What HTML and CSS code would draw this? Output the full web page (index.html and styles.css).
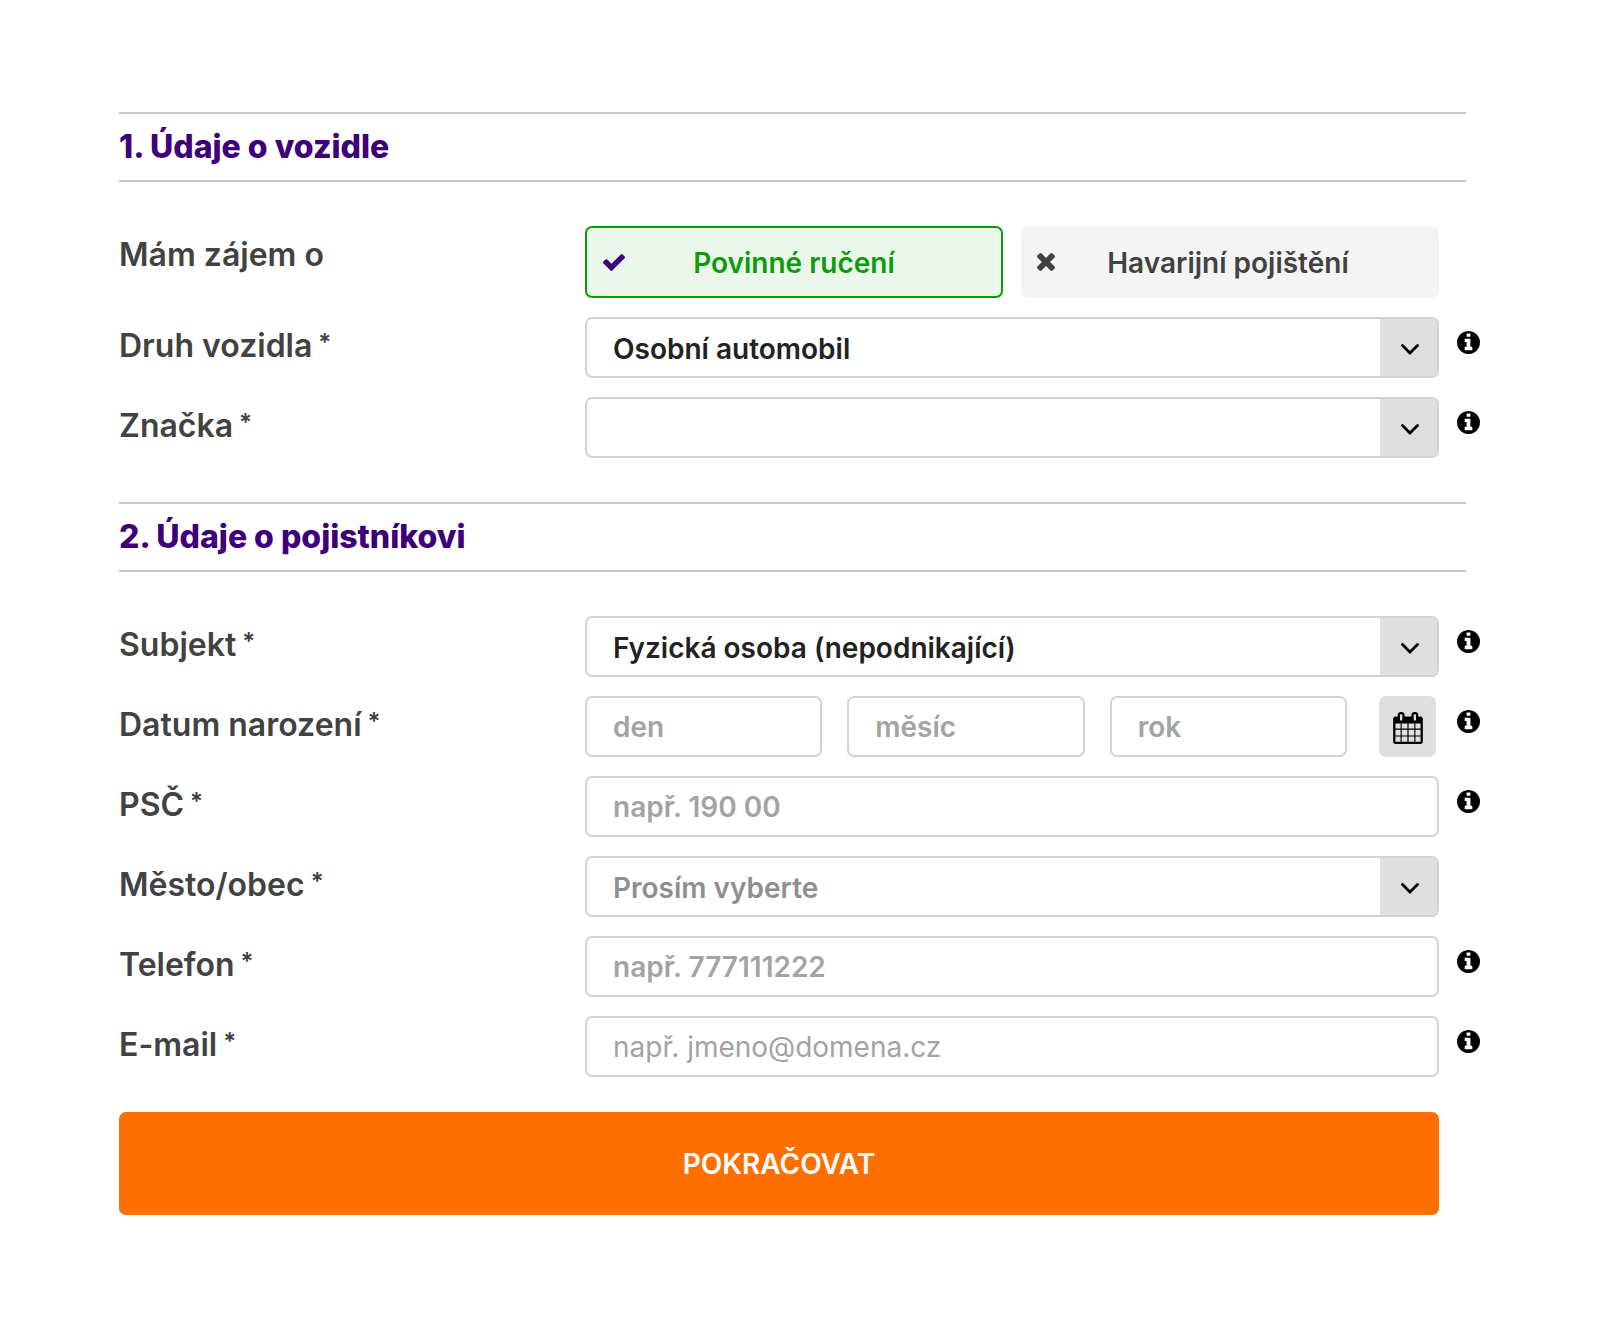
FILE: index.html
```html
<!DOCTYPE html>
<html lang="cs">
<head>
<meta charset="utf-8">
<meta name="viewport" content="width=device-width, initial-scale=1">
<title>Povinné ručení</title>
<link rel="stylesheet" href="styles.css">
</head>
<body>
<svg class="sprite" aria-hidden="true">
  <symbol id="icon-check" viewBox="121 334 1550 1188"><path d="M1671 566q0 40-28 68l-724 724-136 136q-28 28-68 28t-68-28l-136-136-362-362q-28-28-28-68t28-68l136-136q28-28 68-28t68 28l294 295 656-657q28-28 68-28t68 28l136 136q28 28 28 68z"/></symbol>
  <symbol id="icon-times" viewBox="302 366 1188 1188"><path d="M1490 1322q0 40-28 68l-136 136q-28 28-68 28t-68-28l-294-294-294 294q-28 28-68 28t-68-28l-136-136q-28-28-28-68t28-68l294-294-294-294q-28-28-28-68t28-68l136-136q28-28 68-28t68 28l294 294 294-294q28-28 68-28t68 28l136 136q28 28 28 68t-28 68l-294 294 294 294q28 28 28 68z"/></symbol>
  <symbol id="icon-info" viewBox="128 128 1536 1536"><path d="M1152 1376v-160q0-14-9-23t-23-9h-96v-512q0-14-9-23t-23-9h-320q-14 0-23 9t-9 23v160q0 14 9 23t23 9h96v320h-96q-14 0-23 9t-9 23v160q0 14 9 23t23 9h448q14 0 23-9t9-23zm-128-896v-160q0-14-9-23t-23-9h-192q-14 0-23 9t-9 23v160q0 14 9 23t23 9h192q14 0 23-9t9-23zm640 416q0 209-103 385.5t-279.5 279.5-385.5 103-385.5-103-279.5-279.5-103-385.5 103-385.5 279.5-279.5 385.5-103 385.5 103 279.5 279.5 103 385.5z"/></symbol>
  <symbol id="icon-calendar" viewBox="64 0 1664 1792"><path d="M192 1664h288v-288h-288v288zm352 0h320v-288h-320v288zm-352-352h288v-320h-288v320zm352 0h320v-320h-320v320zm-352-384h288v-288h-288v288zm736 736h320v-288h-320v288zm-384-736h320v-288h-320v288zm768 736h288v-288h-288v288zm-384-352h320v-320h-320v320zm-352-864v-288q0-13-9.500-22.500t-22.500-9.500h-64q-13 0-22.500 9.500t-9.500 22.500v288q0 13 9.500 22.500t22.500 9.500h64q13 0 22.500-9.500t9.500-22.500zm736 864h288v-320h-288v320zm-384-384h320v-288h-320v288zm384 0h288v-288h-288v288zm32-480v-288q0-13-9.500-22.500t-22.500-9.500h-64q-13 0-22.500 9.500t-9.500 22.500v288q0 13 9.500 22.500t22.500 9.500h64q13 0 22.500-9.500t9.500-22.500zm384-64v1280q0 52-38 90t-90 38h-1408q-52 0-90-38t-38-90v-1280q0-52 38-90t90-38h128v-96q0-66 47-113t113-47h64q66 0 113 47t47 113v96h384v-96q0-66 47-113t113-47h64q66 0 113 47t47 113v96h128q52 0 90 38t38 90z"/></symbol>
  <symbol id="icon-chevron" viewBox="0 0 18 11"><path d="M1.500 1.500 9 9l7.500-7.500" fill="none" stroke="currentColor" stroke-width="2.800" stroke-linecap="round"/></symbol>
</svg>

<form class="form">
  <section class="section">
    <h2 class="section-title">1. Údaje o vozidle</h2>
    <div class="rows">
      <div class="row" role="group" aria-labelledby="interest">
        <span class="label" id="interest">Mám zájem o</span>
        <div class="choices">
          <label class="choice">
            <input class="choice-input" type="checkbox" checked>
            <svg class="icon-check"><use href="#icon-check"/></svg>
            <span class="choice-text">Povinné ručení</span>
          </label>
          <label class="choice">
            <input class="choice-input" type="checkbox">
            <svg class="icon-times"><use href="#icon-times"/></svg>
            <span class="choice-text">Havarijní pojištění</span>
          </label>
        </div>
      </div>
      <div class="row">
        <label class="label" for="type">Druh vozidla<span class="required">*</span></label>
        <div class="select">
          <select class="field" id="type"><option>Osobní automobil</option></select>
          <span class="select-arrow"><svg><use href="#icon-chevron"/></svg></span>
        </div>
        <button class="info" type="button" aria-label="Nápověda"><svg><use href="#icon-info"/></svg></button>
      </div>
      <div class="row">
        <label class="label" for="brand">Značka<span class="required">*</span></label>
        <div class="select">
          <select class="field" id="brand"><option></option></select>
          <span class="select-arrow"><svg><use href="#icon-chevron"/></svg></span>
        </div>
        <button class="info" type="button" aria-label="Nápověda"><svg><use href="#icon-info"/></svg></button>
      </div>
    </div>
  </section>

  <section class="section">
    <h2 class="section-title">2. Údaje o pojistníkovi</h2>
    <div class="rows">
      <div class="row">
        <label class="label" for="subject">Subjekt<span class="required">*</span></label>
        <div class="select">
          <select class="field" id="subject"><option>Fyzická osoba (nepodnikající)</option></select>
          <span class="select-arrow"><svg><use href="#icon-chevron"/></svg></span>
        </div>
        <button class="info" type="button" aria-label="Nápověda"><svg><use href="#icon-info"/></svg></button>
      </div>
      <div class="row">
        <label class="label" for="day">Datum narození<span class="required">*</span></label>
        <div class="date">
          <div class="date-fields">
            <input class="field" id="day" type="text" inputmode="numeric" placeholder="den" aria-label="Den narození">
            <input class="field" type="text" inputmode="numeric" placeholder="měsíc" aria-label="Měsíc narození">
            <input class="field" type="text" inputmode="numeric" placeholder="rok" aria-label="Rok narození">
          </div>
          <button class="calendar" type="button" aria-label="Vybrat datum"><svg><use href="#icon-calendar"/></svg></button>
        </div>
        <button class="info" type="button" aria-label="Nápověda"><svg><use href="#icon-info"/></svg></button>
      </div>
      <div class="row">
        <label class="label" for="zip">PSČ<span class="required">*</span></label>
        <input class="field" id="zip" type="text" placeholder="např. 190 00">
        <button class="info" type="button" aria-label="Nápověda"><svg><use href="#icon-info"/></svg></button>
      </div>
      <div class="row">
        <label class="label" for="city">Město/obec<span class="required">*</span></label>
        <div class="select">
          <select class="field field-empty" id="city"><option>Prosím vyberte</option></select>
          <span class="select-arrow"><svg><use href="#icon-chevron"/></svg></span>
        </div>
      </div>
      <div class="row">
        <label class="label" for="phone">Telefon<span class="required">*</span></label>
        <input class="field" id="phone" type="tel" placeholder="např. 777111222">
        <button class="info" type="button" aria-label="Nápověda"><svg><use href="#icon-info"/></svg></button>
      </div>
      <div class="row">
        <label class="label" for="email">E-mail<span class="required">*</span></label>
        <input class="field field-light" id="email" type="email" placeholder="např. jmeno@domena.cz">
        <button class="info" type="button" aria-label="Nápověda"><svg><use href="#icon-info"/></svg></button>
      </div>
    </div>
  </section>

  <button class="submit" type="submit">POKRAČOVAT</button>
</form>
</body>
</html>
```
FILE: styles.css
```css
* {
  box-sizing: border-box;
}

body {
  margin: 0;
  background: #fff;
  color: #424242;
  font-family: Inter, "Liberation Sans", sans-serif;
  font-size: 28px;
  font-weight: 600;
}

button,
input,
select {
  margin: 0;
  font: inherit;
}

svg {
  display: block;
  fill: currentColor;
}

.sprite {
  position: absolute;
  width: 0;
  height: 0;
}

.form {
  padding: 112px 120px 112px 119px;
}

.section-title {
  margin: 0 14px 0 0;
  padding: 13px 0;
  border-top: 2px solid #c6c6c6;
  border-bottom: 2px solid #c6c6c6;
  color: #3d007a;
  font-size: 32px;
  font-weight: 800;
  line-height: 40px;
}

.rows {
  display: flex;
  flex-direction: column;
  gap: 19px;
  padding: 44px 0;
}

.section:last-of-type .rows {
  padding-bottom: 35px;
}

.row {
  display: grid;
  grid-template-columns: minmax(200px, 448px) 1fr 23px;
  column-gap: 18px;
  align-items: start;
}

.label {
  padding-top: 9px;
  font-size: 32px;
  line-height: 40px;
}

.required {
  margin-left: 6px;
  font-size: 24px;
  line-height: 24px;
  vertical-align: 6px;
}

.choices {
  display: grid;
  grid-template-columns: 1fr 1fr;
  gap: 18px;
}

.choice {
  display: flex;
  align-items: center;
  height: 72px;
  padding: 0 38px 0 16px;
  border-radius: 7px;
  background: #f4f4f4;
  cursor: pointer;
}

.choice:has(.choice-input:checked) {
  border: 2px solid #0a9c0a;
  background: #ecf7ec;
  color: #0a9c0a;
}

.choice-input {
  position: absolute;
  opacity: 0;
}

.choice-text {
  flex: 1;
  padding-top: 2px;
  text-align: center;
}

.icon-check {
  width: 22px;
  height: 17px;
  color: #3d007a;
}

.icon-times {
  width: 18px;
  height: 18px;
}

.field {
  width: 100%;
  min-width: 0;
  height: 61px;
  padding: 0 26px;
  border: 2px solid #d3d3d3;
  border-radius: 7px;
  background: #fff;
  color: #222;
}

.field::placeholder {
  color: #a3a3a3;
  opacity: 1;
}

.field-empty {
  color: #8f8f8f;
}

.field-light {
  font-weight: 400;
}

.select {
  display: grid;
}

.select .field,
.select-arrow {
  grid-area: 1 / 1;
}

.select .field {
  appearance: none;
  padding-top: 2px;
}

.select .field-empty {
  color: #8f8f8f;
}

.select-arrow {
  display: grid;
  place-items: center;
  justify-self: end;
  width: 57px;
  margin: 2px;
  padding: 4px 0 0 2px;
  border-radius: 0 5px 5px 0;
  background: #dfdfdf;
  color: #000;
  pointer-events: none;
}

.select-arrow svg {
  width: 18px;
  height: 11px;
}

.date {
  display: flex;
  gap: 32px;
  padding-right: 3px;
}

.date-fields {
  display: grid;
  flex: 1;
  grid-template-columns: repeat(3, 1fr);
  gap: 25px;
}

.calendar {
  display: grid;
  place-items: center;
  width: 57px;
  padding: 3px 0 0;
  border: 0;
  border-radius: 7px;
  background: #dfdfdf;
  color: #000;
}

.calendar svg {
  width: 30px;
  height: 32px;
}

.info {
  margin-top: 14px;
  padding: 0;
  border: 0;
  background: none;
  color: #000;
}

.info svg {
  width: 23px;
  height: 23px;
}

.submit {
  display: block;
  width: calc(100% - 41px);
  height: 103px;
  border: 0;
  border-radius: 7px;
  background: #ff6f00;
  color: #fff;
}
```
